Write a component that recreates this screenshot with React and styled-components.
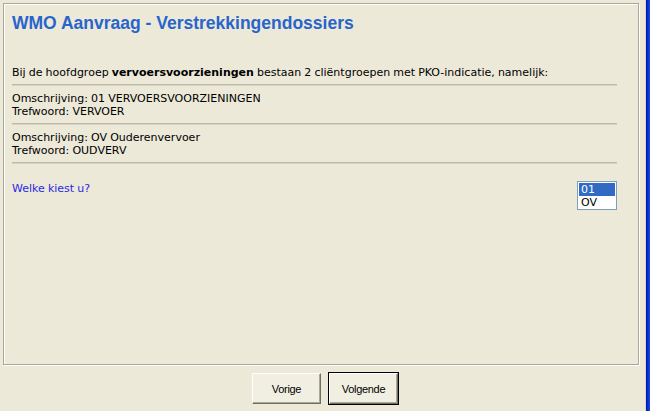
import React, { useState } from "react";
import styled, { createGlobalStyle } from "styled-components";

const GlobalStyle = createGlobalStyle`
  html, body {
    margin: 0;
    padding: 0;
    background: #ece9d8;
  }
`;

const Window = styled.div`
  width: 650px;
  height: 411px;
  display: flex;
  background: #ece9d8;
  overflow: hidden;
`;

const Main = styled.div`
  flex: 1;
  display: flex;
  flex-direction: column;
  padding: 3px 0 0 3px;
`;

const Frame = styled.div`
  width: 4px;
  border-left: 1px solid #d8d5c8;
  background: linear-gradient(90deg, #0019a8 0%, #0a36d8 60%, #1c4ae0 100%);
`;

const Panel = styled.div`
  width: 636px;
  height: 362px;
  border: 1px solid #aca899;
  box-shadow: inset 1px 1px 0 #fff, 1px 1px 0 #fff;
  padding: 8px 21px 0 8px;
  box-sizing: border-box;
  font-family: "DejaVu Sans", Verdana, sans-serif;
  font-size: 11px;
  word-spacing: -0.4px;
  color: #000;
`;

const Title = styled.h1`
  margin: 0 0 32px 0;
  font-family: "Liberation Sans", Arial, sans-serif;
  font-weight: bold;
  font-size: 17.5px;
  word-spacing: 0;
  line-height: 22px;
  color: #2864cc;
`;

const Line = styled.div`
  line-height: 13px;
  white-space: nowrap;
`;

const Rule = styled.div`
  height: 1px;
  background: #bcb9ab;
  border-bottom: 1px solid #d6d3c5;
  margin: 5px 0 6px;
`;

const Block = styled.div`
  display: flex;
  flex-direction: column;
`;

const QuestionRow = styled.div`
  display: flex;
  justify-content: space-between;
  align-items: flex-start;
  margin-top: 18px;
`;

const Question = styled.div`
  color: #2a2ae6;
  line-height: 13px;
`;

const ListBox = styled.div`
  width: 40px;
  height: 29px;
  box-sizing: border-box;
  border: 1px solid #7f9db9;
  background: #fff;
  padding: 1px;
  margin-top: -1px;
`;

const Option = styled.div`
  height: 13px;
  line-height: 13px;
  padding-left: 2px;
  font-size: 11px;
  font-family: "DejaVu Sans", Verdana, sans-serif;
  background: ${(p) => (p.selected ? "#316ac5" : "#fff")};
  color: ${(p) => (p.selected ? "#fff" : "#000")};
  cursor: default;
`;

const ButtonBar = styled.div`
  display: flex;
  justify-content: center;
  gap: 8px;
  margin-top: 8px;
  padding-left: 2px;
`;

const Button = styled.button`
  width: 69px;
  height: 31px;
  box-sizing: border-box;
  background: #f1efe2;
  font-family: "Liberation Sans", Tahoma, sans-serif;
  font-size: 11px;
  letter-spacing: -0.3px;
  color: #000;
  border: 1px solid;
  border-color: #fff #716f64 #716f64 #fff;
  box-shadow: inset -1px -1px 0 #aca899, inset 1px 1px 0 #f1efe2;
  outline: ${(p) => (p.primary ? "1px solid #000" : "none")};
  outline-offset: 0;
  padding: 0;
`;

const entries = [
  { omschrijving: "01 VERVOERSVOORZIENINGEN", trefwoord: "VERVOER" },
  { omschrijving: "OV Ouderenvervoer", trefwoord: "OUDVERV" },
];

export default function App() {
  const [choice, setChoice] = useState("01");

  return (
    <Window>
      <GlobalStyle />
      <Main>
        <Panel>
          <Title>WMO Aanvraag - Verstrekkingendossiers</Title>
          <Line>
            Bij de hoofdgroep <b>vervoersvoorzieningen</b> bestaan 2 cliëntgroepen
            met PKO-indicatie, namelijk:
          </Line>
          <Rule />
          {entries.map((e) => (
            <React.Fragment key={e.trefwoord}>
              <Block>
                <Line>Omschrijving: {e.omschrijving}</Line>
                <Line>Trefwoord: {e.trefwoord}</Line>
              </Block>
              <Rule />
            </React.Fragment>
          ))}
          <QuestionRow>
            <Question>Welke kiest u?</Question>
            <ListBox>
              {["01", "OV"].map((v) => (
                <Option key={v} selected={choice === v} onClick={() => setChoice(v)}>
                  {v}
                </Option>
              ))}
            </ListBox>
          </QuestionRow>
        </Panel>
        <ButtonBar>
          <Button>Vorige</Button>
          <Button primary>Volgende</Button>
        </ButtonBar>
      </Main>
      <Frame />
    </Window>
  );
}
